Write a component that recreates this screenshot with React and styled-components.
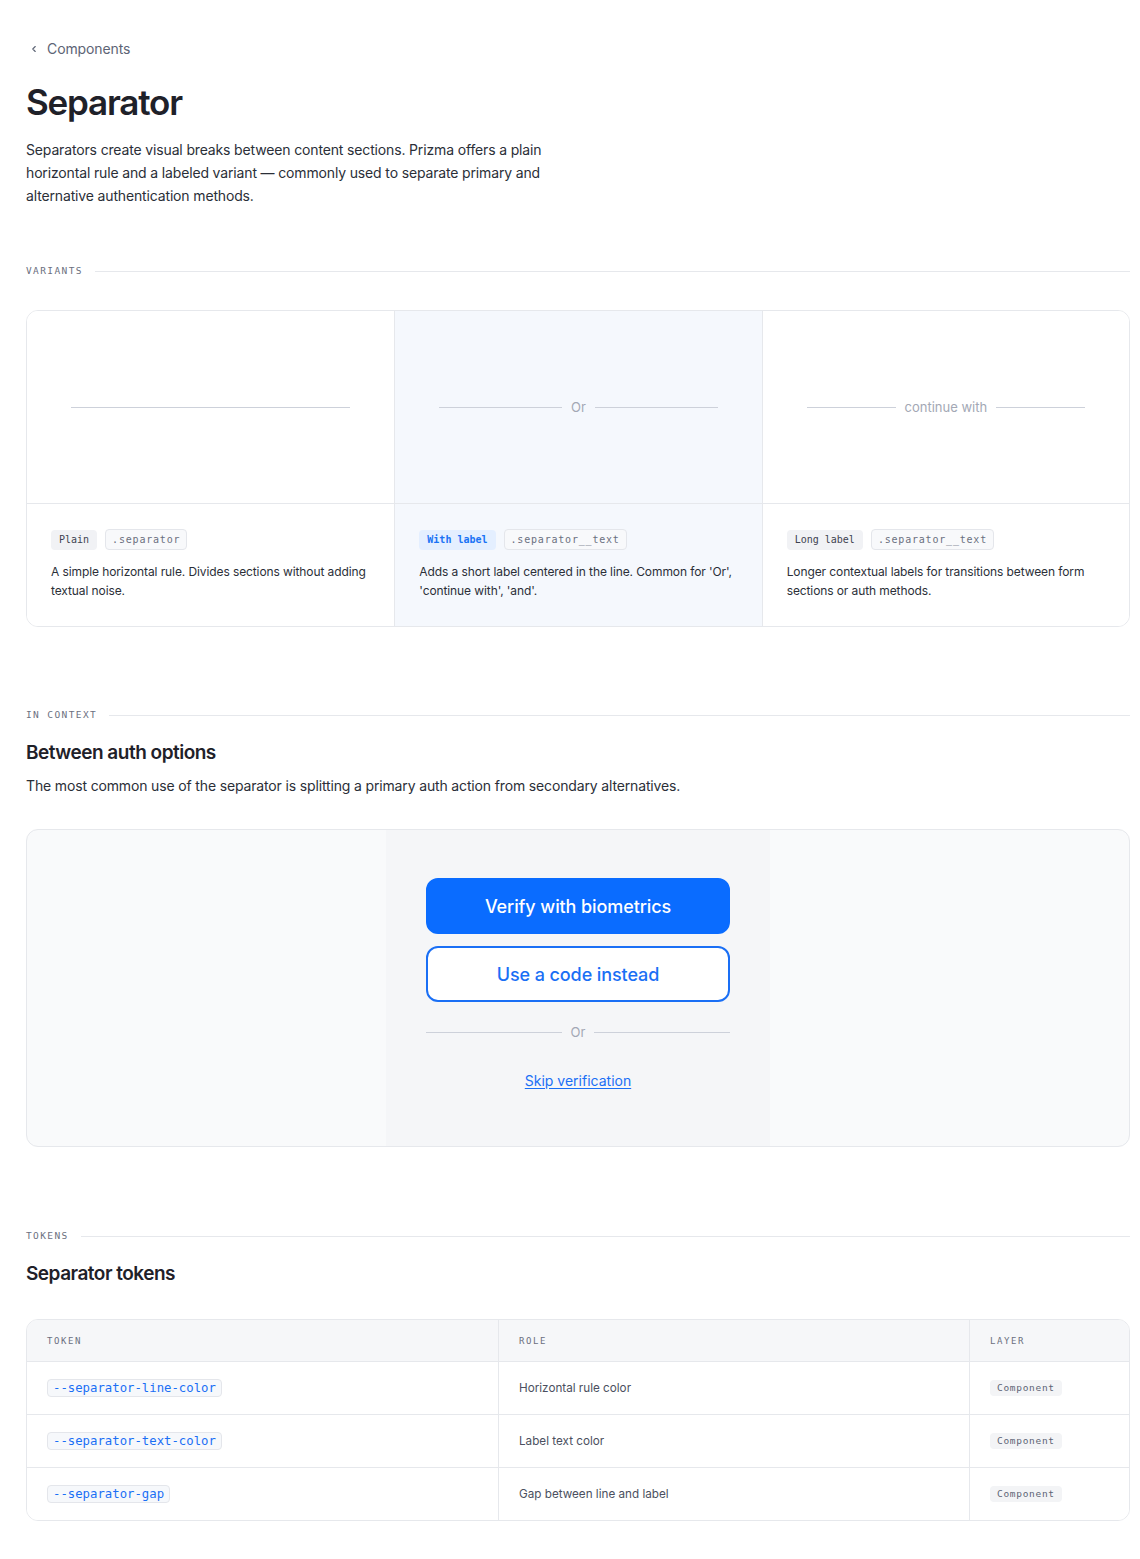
import React from "react";
import styled, { createGlobalStyle } from "styled-components";

const Global = createGlobalStyle`
  html, body { margin: 0; padding: 0; background: #ffffff; }
  body {
    font-family: Inter, "Noto Sans", sans-serif;
    color: #22252d;
    -webkit-font-smoothing: antialiased;
  }
  * { box-sizing: border-box; }
`;

const MONO = `"DejaVu Sans Mono", "Liberation Mono", monospace`;

const Page = styled.main`
  padding: 38px 10px 40px 26px;
`;

const Breadcrumb = styled.a`
  display: inline-flex;
  align-items: center;
  gap: 8px;
  font-size: 14px;
  line-height: 20px;
  color: #5d6475;
  text-decoration: none;
  padding-left: 3px;
  letter-spacing: -0.1px;
`;

const Title = styled.h1`
  margin: 21px 0 0;
  font-size: 35px;
  line-height: 44px;
  font-weight: 600;
  letter-spacing: -1.2px;
  color: #1f2129;
`;

const Lead = styled.p`
  margin: 14px 0 0;
  max-width: 548px;
  font-size: 14px;
  line-height: 23px;
  letter-spacing: -0.15px;
  color: #2b2f38;
`;

const SectionHead = styled.div`
  display: flex;
  align-items: center;
  gap: 12px;
  margin-top: ${(p) => p.$mt}px;
`;

const SectionLabel = styled.span`
  font-family: ${MONO};
  font-size: 9.5px;
  line-height: 14px;
  letter-spacing: 1.4px;
  color: #6b7080;
  text-transform: uppercase;
`;

const SectionRule = styled.span`
  flex: 1;
  height: 1px;
  background: #e6e8ec;
`;

const H2 = styled.h2`
  margin: 18px 0 0;
  font-size: 19px;
  line-height: 26px;
  font-weight: 600;
  letter-spacing: -0.5px;
  color: #1f2129;
`;

const Sub = styled.p`
  margin: 9px 0 0;
  font-size: 14px;
  line-height: 22px;
  letter-spacing: -0.15px;
  color: #2b2f38;
`;

const VariantGrid = styled.div`
  margin-top: 32px;
  display: grid;
  grid-template-columns: repeat(3, 1fr);
  border: 1px solid #e6e8ec;
  border-radius: 12px;
  overflow: hidden;
`;

const Variant = styled.div`
  display: flex;
  flex-direction: column;
  background: ${(p) => (p.$active ? "#f5f8fd" : "#ffffff")};
  & + & { border-left: 1px solid #e6e8ec; }
`;

const Preview = styled.div`
  height: 193px;
  display: flex;
  align-items: center;
  padding: 0 44px;
  border-bottom: 1px solid #e6e8ec;
`;

const Sep = styled.div`
  flex: 1;
  display: flex;
  align-items: center;
  gap: 9px;
`;

const Line = styled.span`
  flex: 1;
  height: 1px;
  background: #cdd1da;
`;

const SepText = styled.span`
  font-size: 13px;
  line-height: 20px;
  color: #a3a8b5;
  white-space: nowrap;
`;

const VariantInfo = styled.div`
  padding: 25px 24px 26px;
`;

const Tags = styled.div`
  display: flex;
  gap: 8px;
  align-items: center;
`;

const Tag = styled.span`
  font-family: ${MONO};
  font-size: 10px;
  line-height: 20px;
  height: 20px;
  padding: 0 8px;
  border-radius: 4px;
  font-weight: ${(p) => (p.$blue ? 700 : 400)};
  background: ${(p) => (p.$blue ? "#e4efff" : "#f1f2f5")};
  color: ${(p) => (p.$blue ? "#1a73f5" : "#3d4250")};
`;

const ClassTag = styled.span`
  font-family: ${MONO};
  font-size: 10px;
  line-height: 19px;
  height: 21px;
  padding: 0 6px;
  border-radius: 4px;
  border: 1px solid #e4e6eb;
  background: #f8f9fb;
  color: #6b7080;
  letter-spacing: 0.8px;
`;

const VariantText = styled.p`
  margin: 12px 0 0;
  font-size: 12px;
  line-height: 19px;
  letter-spacing: -0.1px;
  color: #2b2f38;
`;

const Stage = styled.div`
  margin-top: 32px;
  display: flex;
  justify-content: center;
  background: #f9fafb;
  border: 1px solid #e6e8ec;
  border-radius: 12px;
  overflow: hidden;
`;

const Frame = styled.div`
  width: 384px;
  background: #f5f6f8;
  padding: 48px 40px 55px;
  display: flex;
  flex-direction: column;
`;

const Button = styled.button`
  height: 56px;
  border-radius: 12px;
  font-family: Inter, "Noto Sans", sans-serif;
  font-size: 18px;
  font-weight: 500;
  letter-spacing: -0.1px;
  cursor: pointer;
  border: 2px solid #1a6ff5;
  background: ${(p) => (p.$primary ? "#0a6cff" : "#ffffff")};
  border-color: ${(p) => (p.$primary ? "#0a6cff" : "#1a6ff5")};
  color: ${(p) => (p.$primary ? "#ffffff" : "#1a6ff5")};
  & + & { margin-top: 12px; }
`;

const StageSep = styled(Sep)`
  flex: none;
  margin-top: 20px;
`;

const SkipLink = styled.a`
  margin-top: 29px;
  align-self: center;
  font-size: 14px;
  line-height: 20px;
  color: #1a6ff5;
  text-decoration: underline;
  text-underline-offset: 2px;
`;

const Table = styled.div`
  margin-top: 32px;
  border: 1px solid #e6e8ec;
  border-radius: 12px;
  overflow: hidden;
`;

const Row = styled.div`
  display: grid;
  grid-template-columns: 471px 471px 1fr;
  height: ${(p) => (p.$head ? 41 : 53)}px;
  background: ${(p) => (p.$head ? "#f6f7f9" : "#ffffff")};
  & + & { border-top: 1px solid #e6e8ec; }
`;

const Cell = styled.div`
  display: flex;
  align-items: center;
  padding: 0 20px;
  & + & { border-left: ${(p) => (p.$head ? "none" : "1px solid #e6e8ec")}; }
`;

const HeadText = styled.span`
  font-family: ${MONO};
  font-size: 9px;
  letter-spacing: 1.6px;
  color: #6b7080;
  text-transform: uppercase;
`;

const TokenCode = styled.code`
  font-family: ${MONO};
  font-size: 12.3px;
  line-height: 16px;
  padding: 0 5px;
  border: 1px solid #e4e6eb;
  border-radius: 4px;
  background: #f6f8fb;
  color: #1a6ff5;
`;

const RoleText = styled.span`
  font-size: 11.7px;
  color: #4b5060;
`;

const LayerPill = styled.span`
  font-family: ${MONO};
  font-size: 9.5px;
  line-height: 16px;
  padding: 0 7px;
  border-radius: 4px;
  background: #f3f4f6;
  color: #5d6475;
  letter-spacing: 0.7px;
`;

const Chevron = () => (
  <svg width="10" height="10" viewBox="0 0 24 24" fill="none" stroke="#5d6475" strokeWidth="2.6" strokeLinecap="round" strokeLinejoin="round">
    <path d="M15 18l-6-6 6-6" />
  </svg>
);

const variants = [
  { tag: "Plain", cls: ".separator", label: null, text: "A simple horizontal rule. Divides sections without adding textual noise." },
  { tag: "With label", cls: ".separator__text", label: "Or", active: true, text: "Adds a short label centered in the line. Common for 'Or', 'continue with', 'and'." },
  { tag: "Long label", cls: ".separator__text", label: "continue with", text: "Longer contextual labels for transitions between form sections or auth methods." },
];

const tokens = [
  { name: "--separator-line-color", role: "Horizontal rule color" },
  { name: "--separator-text-color", role: "Label text color" },
  { name: "--separator-gap", role: "Gap between line and label" },
];

export default function App() {
  return (
    <>
      <Global />
      <Page>
        <Breadcrumb href="#">
          <Chevron />
          Components
        </Breadcrumb>
        <Title>Separator</Title>
        <Lead>
          Separators create visual breaks between content sections. Prizma offers a plain horizontal rule and a labeled variant — commonly used to separate primary and alternative authentication methods.
        </Lead>

        <SectionHead $mt={57}>
          <SectionLabel>Variants</SectionLabel>
          <SectionRule />
        </SectionHead>

        <VariantGrid>
          {variants.map((v) => (
            <Variant key={v.tag} $active={v.active}>
              <Preview>
                <Sep>
                  <Line />
                  {v.label && <SepText>{v.label}</SepText>}
                  {v.label && <Line />}
                </Sep>
              </Preview>
              <VariantInfo>
                <Tags>
                  <Tag $blue={v.active}>{v.tag}</Tag>
                  <ClassTag>{v.cls}</ClassTag>
                </Tags>
                <VariantText>{v.text}</VariantText>
              </VariantInfo>
            </Variant>
          ))}
        </VariantGrid>

        <SectionHead $mt={81}>
          <SectionLabel>In context</SectionLabel>
          <SectionRule />
        </SectionHead>
        <H2>Between auth options</H2>
        <Sub>The most common use of the separator is splitting a primary auth action from secondary alternatives.</Sub>

        <Stage>
          <Frame>
            <Button $primary>Verify with biometrics</Button>
            <Button>Use a code instead</Button>
            <StageSep>
              <Line />
              <SepText>Or</SepText>
              <Line />
            </StageSep>
            <SkipLink href="#">Skip verification</SkipLink>
          </Frame>
        </Stage>

        <SectionHead $mt={82}>
          <SectionLabel>Tokens</SectionLabel>
          <SectionRule />
        </SectionHead>
        <H2>Separator tokens</H2>

        <Table>
          <Row $head>
            <Cell $head><HeadText>Token</HeadText></Cell>
            <Cell $head><HeadText>Role</HeadText></Cell>
            <Cell $head><HeadText>Layer</HeadText></Cell>
          </Row>
          {tokens.map((t) => (
            <Row key={t.name}>
              <Cell><TokenCode>{t.name}</TokenCode></Cell>
              <Cell><RoleText>{t.role}</RoleText></Cell>
              <Cell><LayerPill>Component</LayerPill></Cell>
            </Row>
          ))}
        </Table>
      </Page>
    </>
  );
}
